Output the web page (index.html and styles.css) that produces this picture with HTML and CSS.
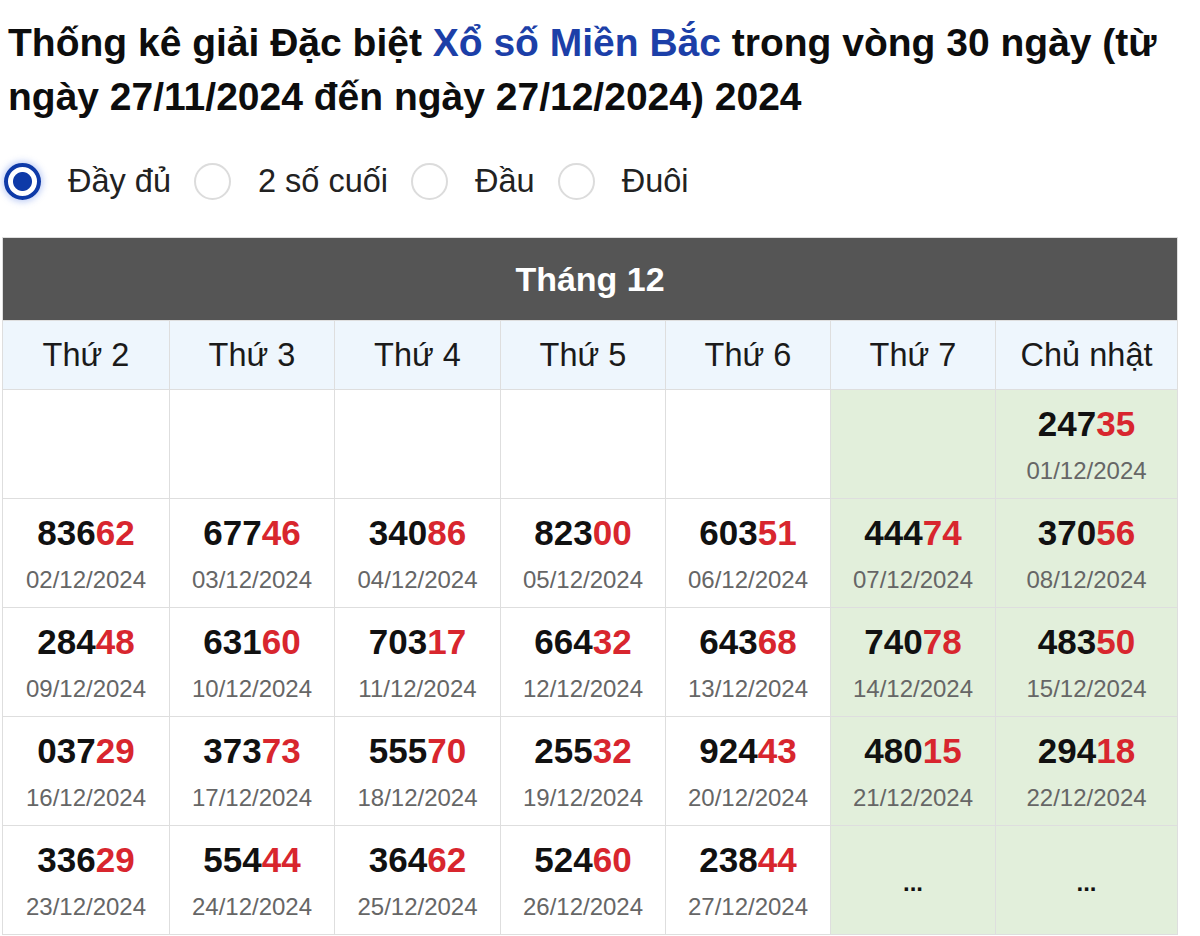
FILE: index.html
```html
<!DOCTYPE html>
<html lang="vi">
<head>
<meta charset="utf-8">
<title>Thống kê giải Đặc biệt</title>
<link rel="stylesheet" href="styles.css">
</head>
<body>
<div class="page">
  <h1 class="title">Thống kê giải Đặc biệt <a class="link" href="#">Xổ số Miền Bắc</a> trong vòng 30 ngày (từ ngày 27/11/2024 đến ngày 27/12/2024) 2024</h1>

  <div class="options">
    <label class="opt"><span class="radio checked"></span><span class="opt-label">Đầy đủ</span></label>
    <label class="opt"><span class="radio"></span><span class="opt-label">2 số cuối</span></label>
    <label class="opt"><span class="radio"></span><span class="opt-label">Đầu</span></label>
    <label class="opt"><span class="radio"></span><span class="opt-label">Đuôi</span></label>
  </div>

  <table class="cal">
    <colgroup>
      <col class="c1"><col class="c2"><col class="c3"><col class="c4"><col class="c5"><col class="c6"><col class="c7">
    </colgroup>
    <thead>
      <tr><th class="month" colspan="7">Tháng 12</th></tr>
      <tr class="days">
        <th>Thứ 2</th><th>Thứ 3</th><th>Thứ 4</th><th>Thứ 5</th><th>Thứ 6</th><th>Thứ 7</th><th>Chủ nhật</th>
      </tr>
    </thead>
    <tbody>
      <tr>
        <td></td><td></td><td></td><td></td><td></td><td class="we"></td>
        <td class="we"><div class="num">247<span class="tail">35</span></div><div class="date">01/12/2024</div></td>
      </tr>
      <tr>
        <td><div class="num">836<span class="tail">62</span></div><div class="date">02/12/2024</div></td>
        <td><div class="num">677<span class="tail">46</span></div><div class="date">03/12/2024</div></td>
        <td><div class="num">340<span class="tail">86</span></div><div class="date">04/12/2024</div></td>
        <td><div class="num">823<span class="tail">00</span></div><div class="date">05/12/2024</div></td>
        <td><div class="num">603<span class="tail">51</span></div><div class="date">06/12/2024</div></td>
        <td class="we"><div class="num">444<span class="tail">74</span></div><div class="date">07/12/2024</div></td>
        <td class="we"><div class="num">370<span class="tail">56</span></div><div class="date">08/12/2024</div></td>
      </tr>
      <tr>
        <td><div class="num">284<span class="tail">48</span></div><div class="date">09/12/2024</div></td>
        <td><div class="num">631<span class="tail">60</span></div><div class="date">10/12/2024</div></td>
        <td><div class="num">703<span class="tail">17</span></div><div class="date">11/12/2024</div></td>
        <td><div class="num">664<span class="tail">32</span></div><div class="date">12/12/2024</div></td>
        <td><div class="num">643<span class="tail">68</span></div><div class="date">13/12/2024</div></td>
        <td class="we"><div class="num">740<span class="tail">78</span></div><div class="date">14/12/2024</div></td>
        <td class="we"><div class="num">483<span class="tail">50</span></div><div class="date">15/12/2024</div></td>
      </tr>
      <tr>
        <td><div class="num">037<span class="tail">29</span></div><div class="date">16/12/2024</div></td>
        <td><div class="num">373<span class="tail">73</span></div><div class="date">17/12/2024</div></td>
        <td><div class="num">555<span class="tail">70</span></div><div class="date">18/12/2024</div></td>
        <td><div class="num">255<span class="tail">32</span></div><div class="date">19/12/2024</div></td>
        <td><div class="num">924<span class="tail">43</span></div><div class="date">20/12/2024</div></td>
        <td class="we"><div class="num">480<span class="tail">15</span></div><div class="date">21/12/2024</div></td>
        <td class="we"><div class="num">294<span class="tail">18</span></div><div class="date">22/12/2024</div></td>
      </tr>
      <tr>
        <td><div class="num">336<span class="tail">29</span></div><div class="date">23/12/2024</div></td>
        <td><div class="num">554<span class="tail">44</span></div><div class="date">24/12/2024</div></td>
        <td><div class="num">364<span class="tail">62</span></div><div class="date">25/12/2024</div></td>
        <td><div class="num">524<span class="tail">60</span></div><div class="date">26/12/2024</div></td>
        <td><div class="num">238<span class="tail">44</span></div><div class="date">27/12/2024</div></td>
        <td class="we mid"><div class="dots">...</div></td>
        <td class="we mid"><div class="dots">...</div></td>
      </tr>
    </tbody>
  </table>
</div>
</body>
</html>
```

FILE: styles.css
```css
html, body {
  margin: 0;
  padding: 0;
  background: #ffffff;
}

body {
  font-family: "Liberation Sans", Arial, sans-serif;
  color: #111;
}

.page {
  width: 1175px;
  padding: 0 0 0 2px;
}

.title {
  margin: 16px 0 0 6px;
  font-size: 39px;
  line-height: 54px;
  font-weight: 700;
  color: #0d0d0d;
}

.link {
  color: #1c3fa8;
  text-decoration: none;
}

.options {
  display: flex;
  align-items: center;
  height: 36px;
  margin: 39px 0 0 2px;
}

.opt {
  display: flex;
  align-items: center;
  margin-right: 23px;
}

.radio {
  box-sizing: border-box;
  width: 37px;
  height: 37px;
  border-radius: 50%;
  border: 2px solid #dcdcdc;
  background: #fff;
  margin-right: 27px;
}

.radio.checked {
  border: 4px solid #0e3aa8;
  background: radial-gradient(circle, #0e3aa8 0 9px, #fff 10px);
  box-shadow: 0 0 6px 2px rgba(80, 120, 230, 0.35);
}

.opt-label {
  font-size: 32.5px;
  color: #222;
  line-height: 36px;
}

.cal {
  margin-top: 38px;
  border-collapse: collapse;
  table-layout: fixed;
  width: 1175px;
}

.c1 { width: 167px; }
.c2 { width: 165px; }
.c3 { width: 166px; }
.c4 { width: 165px; }
.c5 { width: 165px; }
.c6 { width: 165px; }
.c7 { width: 182px; }

.cal th,
.cal td {
  border: 1px solid #dedede;
  text-align: center;
  padding: 0;
}

.month {
  background: #555555;
  color: #ffffff;
  font-size: 34px;
  font-weight: 700;
  height: 82px;
  border-color: #555555;
}

.days th {
  background: #eef6fd;
  font-weight: 400;
  font-size: 32.5px;
  color: #1a1a1a;
  height: 68px;
}

.cal td {
  height: 108px;
  vertical-align: top;
}

.cal td.we {
  background: #e2efdb;
}

.cal td.mid {
  vertical-align: middle;
}

.num {
  margin-top: 13px;
  font-size: 35px;
  line-height: 42px;
  font-weight: 700;
  color: #111;
}

.tail {
  color: #d8262e;
}

.date {
  margin-top: 11px;
  font-size: 24px;
  line-height: 30px;
  color: #666;
}

.dots {
  padding-top: 6px;
  font-size: 24px;
  font-weight: 700;
  color: #111;
}
```
